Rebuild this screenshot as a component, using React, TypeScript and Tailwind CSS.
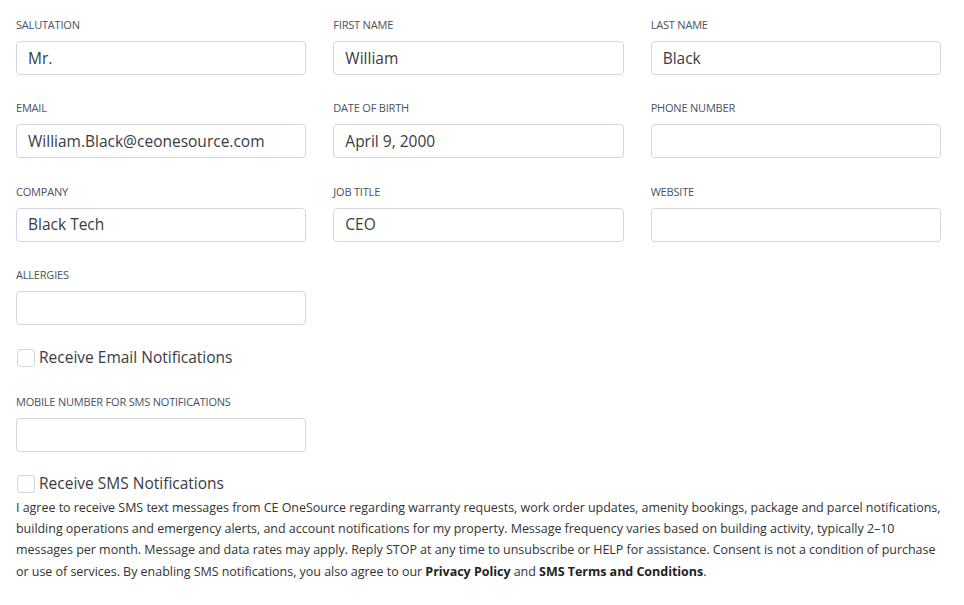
import { useState } from "react";

type Field = { label: string; value?: string };

const fields: Field[] = [
  { label: "Salutation", value: "Mr." },
  { label: "First Name", value: "William" },
  { label: "Last Name", value: "Black" },
  { label: "Email", value: "William.Black@ceonesource.com" },
  { label: "Date of Birth", value: "April 9, 2000" },
  { label: "Phone Number" },
  { label: "Company", value: "Black Tech" },
  { label: "Job Title", value: "CEO" },
  { label: "Website" },
  { label: "Allergies" },
];

function TextField({ label, value }: Field) {
  const [val, setVal] = useState(value ?? "");
  return (
    <label className="flex flex-col">
      <span className="text-[11px] leading-[16px] font-medium uppercase tracking-[-0.2px] text-[#4a5263] mb-[8px]">
        {label}
      </span>
      <input
        value={val}
        onChange={(e) => setVal(e.target.value)}
        className="h-[34px] w-full rounded-[4px] border border-[#d3d6dc] bg-white px-[11px] pb-[1px] text-[15.5px] text-[#383c44] outline-none"
      />
    </label>
  );
}

function Check({ label }: { label: string }) {
  const [on, setOn] = useState(false);
  return (
    <label className="flex items-center gap-[4px] cursor-pointer">
      <input
        type="checkbox"
        checked={on}
        onChange={() => setOn(!on)}
        className="appearance-none w-[18px] h-[18px] ml-[1px] rounded-[3px] border border-[#d3d6dc] bg-white checked:bg-[#2563eb]"
      />
      <span className="text-[15.5px] text-[#383c44]">{label}</span>
    </label>
  );
}

export default function App() {
  return (
    <div
      className="bg-white w-[964px] min-h-[605px] pl-[16px] pr-[23px] pt-[17px]"
      style={{ fontFamily: '"Open Sans", "Liberation Sans", sans-serif' }}
    >
      <div className="grid grid-cols-3 gap-x-[27px] gap-y-[25.4px]">
        {fields.map((f) => (
          <TextField key={f.label} {...f} />
        ))}
      </div>

      <div className="mt-[21px]">
        <Check label="Receive Email Notifications" />
      </div>

      <div className="mt-[25px] w-[290px]">
        <TextField label="Mobile Number for SMS Notifications" />
      </div>

      <div className="mt-[20px]">
        <Check label="Receive SMS Notifications" />
      </div>

      <p className="mt-[1px] text-[12.5px] leading-[21.4px] tracking-[-0.03px] text-[#333]">
        I agree to receive SMS text messages from CE OneSource regarding warranty requests, work
        order updates, amenity bookings, package and parcel notifications, building operations and
        emergency alerts, and account notifications for my property. Message frequency varies based
        on building activity, typically 2–10 messages per month. Message and data rates may apply.
        Reply STOP at any time to unsubscribe or HELP for assistance. Consent is not a condition of
        purchase or use of services. By enabling SMS notifications, you also agree to our{" "}
        <strong className="font-bold text-[#222]">Privacy Policy</strong> and{" "}
        <strong className="font-bold text-[#222]">SMS Terms and Conditions</strong>.
      </p>
    </div>
  );
}
